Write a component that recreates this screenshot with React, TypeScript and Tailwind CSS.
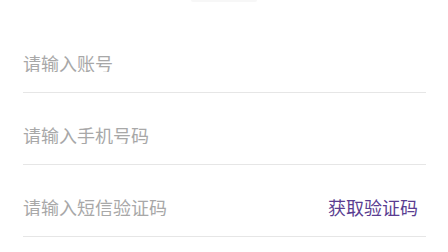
import React from 'react'

const font = { fontFamily: '"Noto Sans CJK SC", "Noto Sans", sans-serif' }

function Row({ placeholder, action }: { placeholder: string; action?: string }) {
  return (
    <div className="flex items-center justify-between border-b border-[#e6e6e6] pt-[33px] pb-[20px]">
      <input
        className="flex-1 min-w-0 bg-transparent outline-none text-[18px] leading-[18px] h-[18px] text-[#333] placeholder:text-[#a8a8a8]"
        placeholder={placeholder}
        style={font}
      />
      {action && (
        <button className="pr-[8px] text-[18px] leading-[18px] text-[#5a3d91]" style={font}>
          {action}
        </button>
      )}
    </div>
  )
}

export default function App() {
  return (
    <div className="w-[448px] h-[252px] bg-white overflow-hidden" style={font}>
      <div className="flex justify-center">
        <div className="w-[66px] h-[2px] bg-[#f7f7f7] rounded-b" />
      </div>
      <div className="pl-[23px] pr-[22px] mt-[19px]">
        <Row placeholder="请输入账号" />
        <Row placeholder="请输入手机号码" />
        <Row placeholder="请输入短信验证码" action="获取验证码" />
      </div>
    </div>
  )
}
